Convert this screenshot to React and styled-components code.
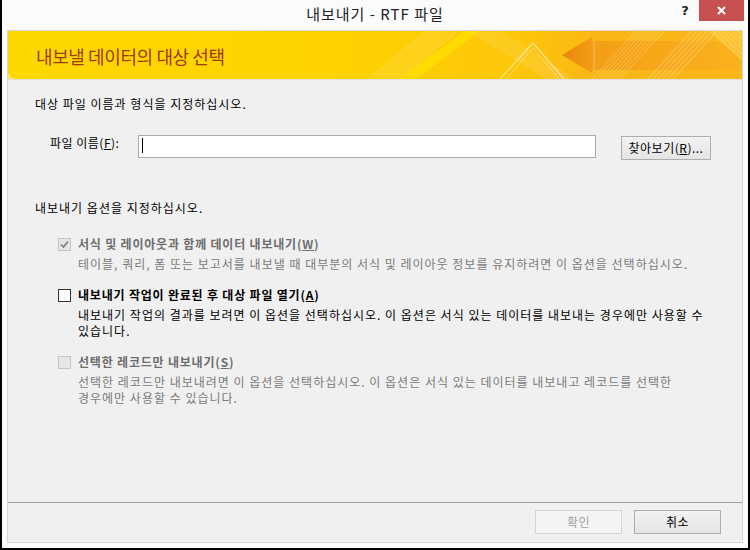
import React from 'react';
import styled, { createGlobalStyle } from 'styled-components';

const GlobalStyle = createGlobalStyle`
  html, body { margin: 0; padding: 0; background: #fff; }
  body { font-family: "Noto Sans CJK KR", "Noto Sans", sans-serif; }
  * { box-sizing: border-box; }
`;

const Window = styled.div`
  width: 750px;
  height: 550px;
  background: #fbfbfb;
  border: 2px solid #000;
  border-top: none;
  display: flex;
  flex-direction: column;
  font-family: "Noto Sans CJK KR", "Noto Sans", sans-serif;
  font-size: 12px;
  letter-spacing: 1px;
  color: #000;
`;

const TitleBar = styled.div`
  height: 30px;
  flex: none;
  display: grid;
  grid-template-columns: 1fr auto 1fr;
  align-items: start;
`;

const Title = styled.div`
  grid-column: 2;
  font-size: 15px;
  line-height: 28px;
  letter-spacing: 1px;
  color: #222;
`;

const Controls = styled.div`
  grid-column: 3;
  justify-self: end;
  display: flex;
  margin-right: 4px;
`;

const HelpButton = styled.div`
  width: 26px;
  height: 21px;
  display: flex;
  align-items: center;
  justify-content: center;
  font-family: "DejaVu Sans", sans-serif;
  font-weight: 700;
  font-size: 13px;
  letter-spacing: 0;
  color: #222;
  padding-right: 2px;
`;

const CloseButton = styled.div`
  width: 45px;
  height: 21px;
  background: #c75050;
  display: flex;
  align-items: center;
  justify-content: center;
`;

const Frame = styled.div`
  flex: 1;
  min-height: 0;
  margin: 0 5px 5px;
  border: 1px solid #d6d6d6;
  background: #f0f0f0;
  display: flex;
  flex-direction: column;
`;

const Banner = styled.div`
  position: relative;
  height: 49px;
  flex: none;
  border-bottom: 1px solid #e0e0e0;
  overflow: hidden;
  display: flex;
  align-items: center;
  padding-left: 28px;
`;

const BannerArt = styled.svg`
  position: absolute;
  left: 0;
  top: 0;
  width: 100%;
  height: 48px;
`;

const BannerTitle = styled.div`
  position: relative;
  font-size: 18px;
  line-height: 24px;
  letter-spacing: -0.4px;
  color: #9c3a0a;
  margin-top: 1px;
`;

const Body = styled.div`
  flex: 1;
  padding: 16px 0 0 27px;
  display: flex;
  flex-direction: column;
`;

const Text = styled.div`
  line-height: 16px;
  color: #000;
`;

const FileRow = styled.div`
  display: flex;
  align-items: flex-start;
  margin-top: 23px;
  padding-left: 15px;
`;

const FieldLabel = styled.div`
  width: 78px;
  white-space: nowrap;
  line-height: 16px;
  letter-spacing: 0.5px;
`;

const TextField = styled.div`
  margin-left: 10px;
  width: 458px;
  height: 23px;
  background: #fff;
  border: 1px solid #ababab;
  padding: 2px 0 0 3px;
`;

const Caret = styled.span`
  display: block;
  width: 1px;
  height: 15px;
  background: #000;
`;

const Button = styled.div`
  width: ${(p) => p.$w}px;
  height: 24px;
  display: flex;
  align-items: center;
  justify-content: center;
  line-height: 16px;
  letter-spacing: 0.5px;
  border: 1px solid ${(p) => (p.$disabled ? '#d5d5d5' : '#adadad')};
  background: ${(p) =>
    p.$disabled ? '#f4f4f4' : 'linear-gradient(#f2f2f2, #e5e5e5)'};
  color: ${(p) => (p.$disabled ? '#a3a3a3' : '#000')};
`;

const BrowseButton = styled(Button)`
  margin-left: 25px;
  margin-top: 1px;
`;

const SectionHead = styled(Text)`
  margin-top: 40px;
`;

const OptionList = styled.div`
  margin-top: 20px;
  padding-left: 23px;
  display: flex;
  flex-direction: column;
  gap: 15px;
`;

const Option = styled.div`
  display: grid;
  grid-template-columns: 13px 1fr;
  column-gap: 7px;
  align-items: center;
`;

const Box = styled.span`
  width: 13px;
  height: 13px;
  display: flex;
  align-items: center;
  justify-content: center;
  border: 1px solid ${(p) => (p.$disabled ? '#c4c4c4' : '#333')};
  background: ${(p) => (p.$disabled ? '#e6e6e6' : '#fff')};
`;

const OptionLabel = styled.div`
  font-weight: 700;
  line-height: 16px;
  letter-spacing: 0.8px;
  color: ${(p) => (p.$disabled ? '#6d6d6d' : '#000')};
`;

const OptionDesc = styled.div`
  grid-column: 2;
  margin-top: 4px;
  line-height: 16px;
  white-space: nowrap;
  color: ${(p) => (p.$disabled ? '#7a7a7a' : '#000')};
`;

const Footer = styled.div`
  flex: none;
  border-top: 1px solid #a0a0a0;
  display: flex;
  justify-content: flex-end;
  gap: 12px;
  padding: 7px 21px 8px 0;
`;

const Check = () => (
  <svg width="9" height="9" viewBox="0 0 9 9">
    <path d="M1 4.5 L3.5 7 L8 1.5" fill="none" stroke="#7a7a7a" strokeWidth="1.6" />
  </svg>
);

const range = (n) => Array.from({ length: n }, (_, i) => i);

const Art = () => (
  <BannerArt viewBox="0 0 734 48" preserveAspectRatio="none">
    <defs>
      <linearGradient id="bg" x1="0" x2="1" y1="0" y2="0">
        <stop offset="0" stopColor="#ffd800" />
        <stop offset="0.45" stopColor="#ffd200" />
        <stop offset="0.7" stopColor="#fdc60a" />
        <stop offset="0.8" stopColor="#f9b716" />
        <stop offset="1" stopColor="#fbb61a" />
      </linearGradient>
      <linearGradient id="head" x1="0" x2="1" y1="0" y2="0">
        <stop offset="0" stopColor="#ec860c" />
        <stop offset="1" stopColor="#f39c18" />
      </linearGradient>
      <linearGradient id="shaft" x1="0" x2="1" y1="0" y2="0">
        <stop offset="0" stopColor="#f29814" />
        <stop offset="1" stopColor="#f9b21e" />
      </linearGradient>
    </defs>
    <rect x="0" y="0" width="734" height="48" fill="url(#bg)" />
    <polygon points="0,42 6,48 0,48" fill="#ffe98c" opacity="0.7" />
    <polygon points="392,48 408,48 472,0 456,0" fill="#ffe600" opacity="0.6" />
    {range(9).map((i) => (
      <line key={'a' + i} x1={360 + i * 4} y1="48" x2={418 + i * 4} y2="0" stroke="#fff" strokeOpacity="0.3" strokeWidth="1" />
    ))}
    {range(7).map((i) => (
      <line key={'b' + i} x1={462 + i * 5} y1="0" x2={540 + i * 4} y2="48" stroke="#fff" strokeOpacity="0.28" strokeWidth="1" />
    ))}
    <polyline points="492,48 525,12 556,48" fill="none" stroke="#fff" strokeOpacity="0.55" strokeWidth="1.2" />
    <polyline points="498,48 525,17 551,48" fill="none" stroke="#fff" strokeOpacity="0.35" strokeWidth="1" />
    <rect x="584" y="10" width="150" height="29" fill="url(#shaft)" opacity="0.8" />
    <polygon points="554,24 584,6 584,42" fill="url(#head)" />
    <line x1="586" y1="10" x2="586" y2="39" stroke="#fff" strokeOpacity="0.35" />
    {range(8).map((i) => (
      <line key={'c' + i} x1={584 + i * 4} y1="48" x2={628 + i * 4} y2="0" stroke="#fff" strokeOpacity="0.28" strokeWidth="1" />
    ))}
    {range(6).map((i) => (
      <line key={'d' + i} x1={640 + i * 5} y1="48" x2={684 + i * 5} y2="0" stroke="#fff" strokeOpacity="0.22" strokeWidth="1.4" />
    ))}
    <polygon points="700,0 734,0 734,30" fill="#ffd44a" opacity="0.45" />
    {range(6).map((i) => (
      <line key={'e' + i} x1={704 + i * 5} y1="0" x2={734} y2={28 - i * 5} stroke="#fff" strokeOpacity="0.3" strokeWidth="1" />
    ))}
  </BannerArt>
);

export default function App() {
  return (
    <>
      <GlobalStyle />
      <Window>
        <TitleBar>
          <Title>내보내기 - RTF 파일</Title>
          <Controls>
            <HelpButton>?</HelpButton>
            <CloseButton>
              <svg width="9" height="9" viewBox="0 0 9 9">
                <path d="M1 1 L8 8 M8 1 L1 8" stroke="#fff" strokeWidth="2" />
              </svg>
            </CloseButton>
          </Controls>
        </TitleBar>
        <Frame>
          <Banner>
            <Art />
            <BannerTitle>내보낼 데이터의 대상 선택</BannerTitle>
          </Banner>
          <Body>
            <Text>대상 파일 이름과 형식을 지정하십시오.</Text>
            <FileRow>
              <FieldLabel>
                파일 이름(<u>F</u>):
              </FieldLabel>
              <TextField>
                <Caret />
              </TextField>
              <BrowseButton $w={90}>
                찾아보기(<u>R</u>)...
              </BrowseButton>
            </FileRow>
            <SectionHead>내보내기 옵션을 지정하십시오.</SectionHead>
            <OptionList>
              <Option>
                <Box $disabled>
                  <Check />
                </Box>
                <OptionLabel $disabled>
                  서식 및 레이아웃과 함께 데이터 내보내기(<u>W</u>)
                </OptionLabel>
                <OptionDesc $disabled>
                  테이블, 쿼리, 폼 또는 보고서를 내보낼 때 대부분의 서식 및 레이아웃 정보를 유지하려면 이 옵션을 선택하십시오.
                </OptionDesc>
              </Option>
              <Option>
                <Box />
                <OptionLabel>
                  내보내기 작업이 완료된 후 대상 파일 열기(<u>A</u>)
                </OptionLabel>
                <OptionDesc>
                  내보내기 작업의 결과를 보려면 이 옵션을 선택하십시오. 이 옵션은 서식 있는 데이터를 내보내는 경우에만 사용할 수
                  <br />
                  있습니다.
                </OptionDesc>
              </Option>
              <Option>
                <Box $disabled />
                <OptionLabel $disabled>
                  선택한 레코드만 내보내기(<u>S</u>)
                </OptionLabel>
                <OptionDesc $disabled>
                  선택한 레코드만 내보내려면 이 옵션을 선택하십시오. 이 옵션은 서식 있는 데이터를 내보내고 레코드를 선택한
                  <br />
                  경우에만 사용할 수 있습니다.
                </OptionDesc>
              </Option>
            </OptionList>
          </Body>
          <Footer>
            <Button $w={87} $disabled>
              확인
            </Button>
            <Button $w={87}>취소</Button>
          </Footer>
        </Frame>
      </Window>
    </>
  );
}
